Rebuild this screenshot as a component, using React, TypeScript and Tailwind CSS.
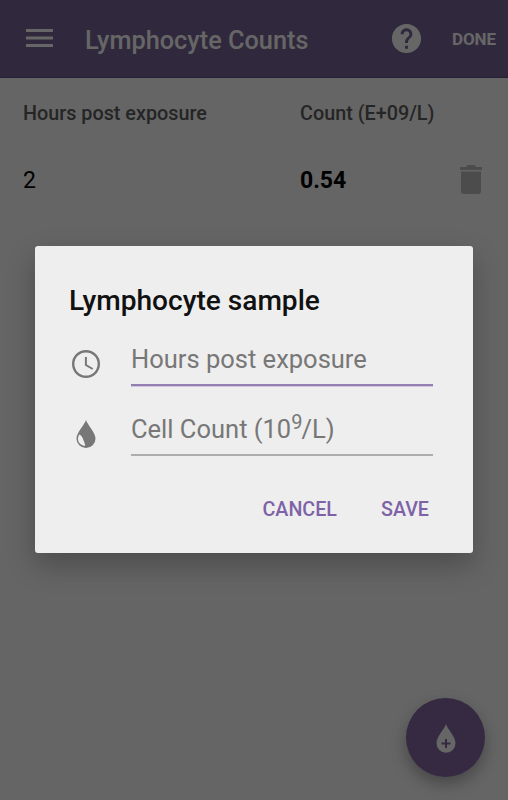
import React, { useState } from 'react';

interface Sample {
  hours: string;
  count: string;
}

interface FieldProps {
  icon: React.ReactNode;
  label: React.ReactNode;
  focused?: boolean;
}

const samples: Sample[] = [{ hours: '2', count: '0.54' }];

const MenuIcon = () => (
  <svg width="27" height="18" viewBox="0 0 27 18" fill="currentColor">
    <path d="M0 0h27v3H0zM0 7.500h27v3H0zM0 15h27v3H0z" />
  </svg>
);

const HelpIcon = () => (
  <svg width="35" height="35" viewBox="0 0 24 24" fill="currentColor">
    <path d="M12 2C6.48 2 2 6.48 2 12s4.48 10 10 10 10-4.48 10-10S17.52 2 12 2zm1 17h-2v-2h2v2zm2.07-7.75l-.9.92C13.45 12.9 13 13.5 13 15h-2v-.5c0-1.1.45-2.1 1.17-2.83l1.24-1.26c.37-.36.59-.86.59-1.41 0-1.1-.9-2-2-2s-2 .9-2 2H8c0-2.21 1.79-4 4-4s4 1.79 4 4c0 .88-.36 1.68-.93 2.25z" />
  </svg>
);

const TrashIcon = () => (
  <svg width="22" height="29" viewBox="0 0 22 29" fill="currentColor">
    <path d="M0 2h6l1.500-2h7L16 2h6v3H0zM1 6.500h20V26a3 3 0 0 1-3 3H4a3 3 0 0 1-3-3z" />
  </svg>
);

const ClockIcon = () => (
  <svg width="28" height="28" viewBox="0 0 28 28" fill="none" stroke="currentColor">
    <circle cx="14" cy="14" r="12.800" strokeWidth="2.400" />
    <path d="M13.900 7v8l6.800 4" strokeWidth="2" />
  </svg>
);

const DropIcon = () => (
  <svg width="20" height="28" viewBox="0 0 20 28">
    <path fill="currentColor" d="M10 0C8.200 5.500.5 12.500.5 18.700a9.500 9.300 0 0 0 19 0C19.500 12.500 11.800 5.500 10 0z" />
    <path fill="#eeeeee" d="M3.200 14.500C.6 19 2 24.800 8.800 26 9.800 25 8.400 23 7.600 20.500 6.800 18 5.500 15 3.200 14.500z" />
  </svg>
);

const DropPlusIcon = () => (
  <svg width="20" height="29" viewBox="0 0 20 29">
    <path fill="#ffffff" d="M10 0C8.200 5.500.5 13 .5 19.200a9.500 9.500 0 0 0 19 0C19.500 13 11.800 5.500 10 0z" />
    <path stroke="#8469a5" strokeWidth="2" d="M5.500 19.500h9M10 15v9" />
  </svg>
);

const Field: React.FC<FieldProps> = ({ icon, label, focused }) => (
  <div className="flex h-[70px]">
    <div className="flex w-[62px] pt-[15px] text-[#777777]">{icon}</div>
    <div className="w-[302px]">
      <div
        className={`pt-[8px] text-[25.500px] leading-[32px] whitespace-nowrap text-[#777777] ${
          focused ? 'h-[51px] border-b-2 border-[#937fb3] shadow-[0_1px_0_#cfc6dc]' : 'h-[51px] border-b-2 border-[#b0adb1]'
        }`}
      >
        {label}
      </div>
    </div>
  </div>
);

const App: React.FC = () => {
  const [open, setOpen] = useState(true);

  return (
    <div className="relative h-[800px] w-[508px] overflow-hidden bg-[#fcfcfc] font-[Roboto,sans-serif]">
      <header className="flex h-[78px] items-center border-b border-[#64508a] bg-[#786496] pl-[26px] text-white">
        <button type="button" aria-label="Menu" className="pb-[2px]">
          <MenuIcon />
        </button>
        <h1 className="ml-[32px] w-[304px] pt-[5px] text-[25.300px] leading-[32px] font-medium whitespace-nowrap">Lymphocyte Counts</h1>
        <button type="button" aria-label="Help">
          <HelpIcon />
        </button>
        <button type="button" className="ml-[28px] pt-[2px] text-[17px] font-bold tracking-[-0.1px]">
          DONE
        </button>
      </header>

      <main>
        <div className="flex h-[70px] items-center pt-[2px] pl-[23px] text-[19.800px] font-medium text-[#5c5c5c]">
          <span className="w-[277px]">Hours post exposure</span>
          <span>Count (E+09/L)</span>
        </div>
        {samples.map((sample) => (
          <div key={sample.hours} className="flex h-[64px] items-center pl-[23px] text-[23px] text-black">
            <span className="w-[277px] pt-[2px]">{sample.hours}</span>
            <span className="w-[160px] pt-[2px] font-bold">{sample.count}</span>
            <button type="button" aria-label="Delete" className="pb-[2px] text-[#bdbdbd]">
              <TrashIcon />
            </button>
          </div>
        ))}
      </main>

      <button
        type="button"
        aria-label="Add sample"
        onClick={() => setOpen(true)}
        className="absolute top-[698px] left-[406px] flex size-[79px] items-center justify-center rounded-full bg-[#8469a5] pt-[2px] shadow-[0_7px_16px_rgba(0,0,0,0.3)]"
      >
        <DropPlusIcon />
      </button>

      {open && (
        <div className="absolute inset-0 flex items-center justify-center bg-black/60 pb-px">
          <div className="h-[307px] w-[438px] rounded-[3px] bg-[#eeeeee] pt-[37px] pl-[34px] shadow-[0_12px_28px_rgba(0,0,0,0.25)]">
            <h2 className="h-[52px] pt-[2px] text-[28.100px] leading-[32px] font-medium whitespace-nowrap text-[#111111]">Lymphocyte sample</h2>
            <Field icon={<span className="pl-[3px]"><ClockIcon /></span>} label="Hours post exposure" focused />
            <Field
              icon={<span className="pl-[7px]"><DropIcon /></span>}
              label={<>Cell Count (10<span className="relative -top-[9px] text-[20px]">9</span><span className="-ml-px">/L)</span></>}
            />
            <div className="mr-[44px] flex justify-end gap-[44px] pt-[21px] text-[19.700px] leading-[28px] font-medium text-[#7e62a8]">
              <button type="button" onClick={() => setOpen(false)}>CANCEL</button>
              <button type="button" onClick={() => setOpen(false)}>SAVE</button>
            </div>
          </div>
        </div>
      )}
    </div>
  );
};

export default App;
